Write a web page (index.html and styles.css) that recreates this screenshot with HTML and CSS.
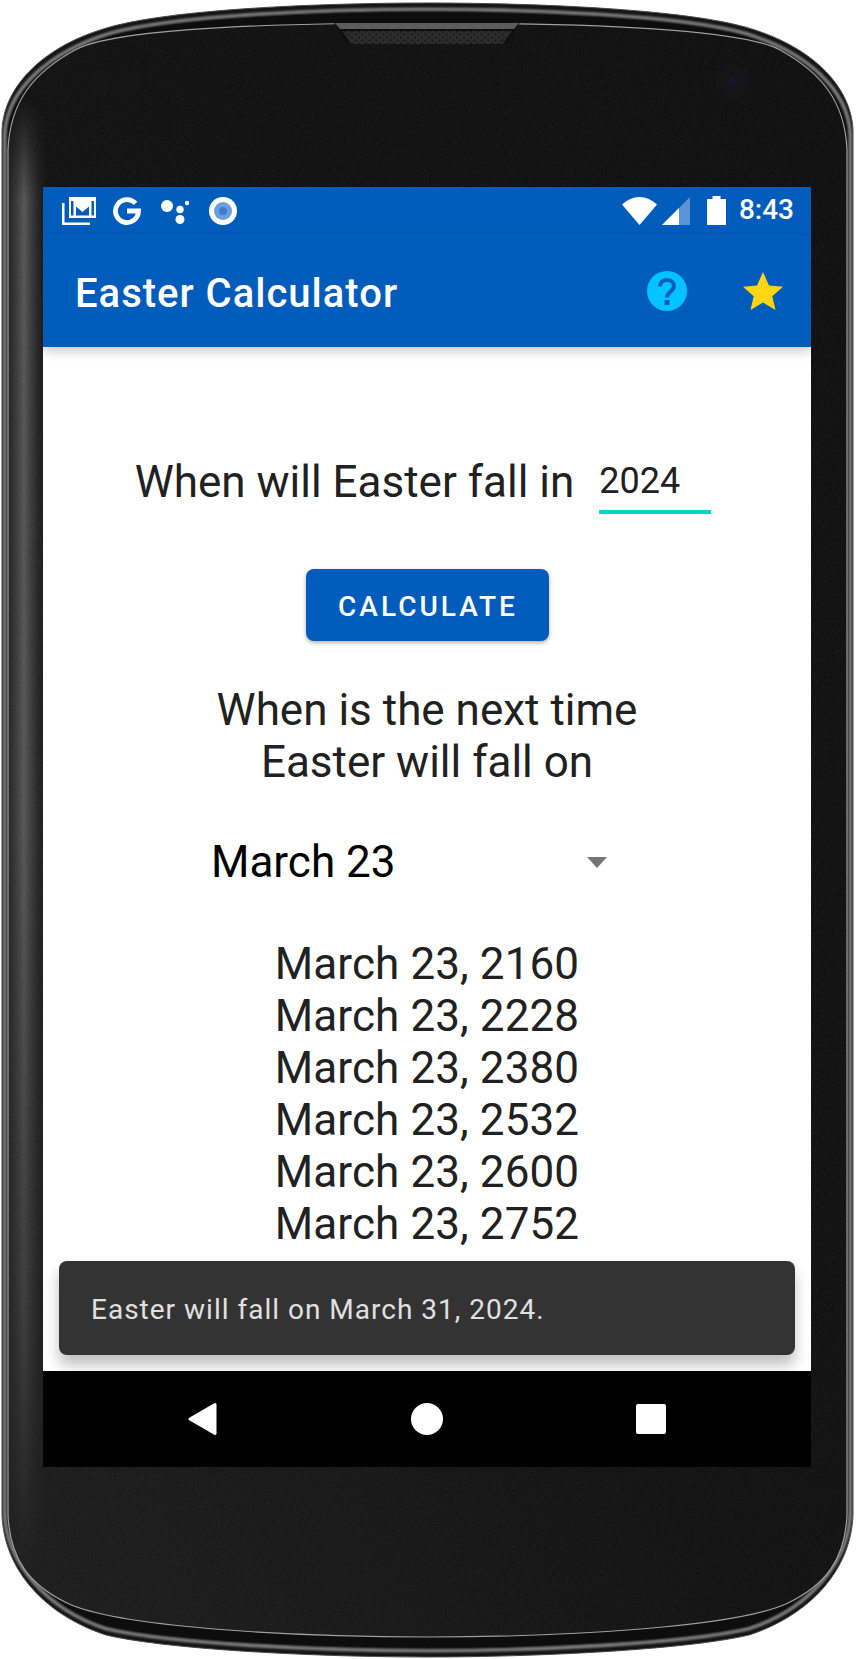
FILE: index.html
```html
<!DOCTYPE html>
<html lang="en">
<head>
<meta charset="utf-8">
<title>Easter Calculator</title>
<link rel="stylesheet" href="styles.css">
</head>
<body>
<div class="phone">
  <svg class="frame" width="856" height="1659" viewBox="0 0 856 1659" aria-hidden="true">
    <defs>
      <path id="outer" d="M2 130C4 85 45 45 110 27C175 9 320 3 428 3C535 3 680 9 745 27C810 45 851 85 853 130L853 1515C851 1570 810 1615 749 1635C685 1650 535 1657 428 1657C320 1657 170 1650 106 1635C45 1615 4 1570 2 1515Z"/>
      <path id="mid" d="M4.500 135C6 90 48 52 110 33C175 15 320 9 428 9C535 9 680 15 745 33C807 52 849 90 850.500 135L850.500 1515C848 1565 807 1610 749 1629C685 1644 535 1651 428 1651C320 1651 170 1644 106 1629C48 1610 7 1565 4.500 1515Z"/>
      <path id="inner" d="M8 150C10 100 35 72 75 50C115 28 280 23 428 23C575 23 740 28 780 50C820 72 845 100 847 150L847 1515C845 1560 825 1585 788 1603C738 1627 565 1637 428 1637C290 1637 117 1627 67 1603C30 1585 10 1560 8 1515Z"/>
      <clipPath id="clipInner"><use href="#inner"/></clipPath>
      <linearGradient id="bodyGrad" x1="1" y1="0" x2="0" y2="1">
        <stop offset="0" stop-color="#0b0b0b"/>
        <stop offset="0.55" stop-color="#0e0e0e"/>
        <stop offset="1" stop-color="#1a1a1a"/>
      </linearGradient>
      <linearGradient id="sideGrad" x1="0" y1="0" x2="1" y2="0">
        <stop offset="0" stop-color="#5a5a5a" stop-opacity="0"/>
        <stop offset="0.2" stop-color="#5a5a5a" stop-opacity="0.25"/>
        <stop offset="0.5" stop-color="#6a6a6a" stop-opacity="0.75"/>
        <stop offset="0.8" stop-color="#5a5a5a" stop-opacity="0.22"/>
        <stop offset="1" stop-color="#5a5a5a" stop-opacity="0"/>
      </linearGradient>
      <linearGradient id="fadeGrad" x1="0" y1="0" x2="0" y2="1">
        <stop offset="0" stop-color="#000"/>
        <stop offset="0.06" stop-color="#000"/>
        <stop offset="0.12" stop-color="#fff"/>
        <stop offset="0.5" stop-color="#fff"/>
        <stop offset="0.8" stop-color="#888"/>
        <stop offset="0.95" stop-color="#000"/>
      </linearGradient>
      <mask id="fadeMask"><rect x="0" y="0" width="856" height="1659" fill="url(#fadeGrad)"/></mask>
      <filter id="soft" x="-2%" y="-2%" width="104%" height="104%"><feGaussianBlur stdDeviation="0.8"/></filter>
      <filter id="grain" x="0" y="0" width="100%" height="100%">
        <feTurbulence type="fractalNoise" baseFrequency="0.9" numOctaves="2" seed="4"/>
        <feColorMatrix values="0 0 0 0 1  0 0 0 0 1  0 0 0 0 1  0.1 0 0 0 -0.02"/>
      </filter>
      <pattern id="dots" width="7" height="6" patternUnits="userSpaceOnUse">
        <circle cx="2" cy="1.500" r="1" fill="#141414"/>
        <circle cx="5.500" cy="4.500" r="1" fill="#141414"/>
      </pattern>
    </defs>
    <use href="#outer" fill="#151515" stroke="#4a4a4a" stroke-width="1"/>
    <use href="#mid" fill="#101010" stroke="#8c8c8c" stroke-width="2.600" filter="url(#soft)"/>
    <use href="#inner" fill="url(#bodyGrad)"/>
    <g clip-path="url(#clipInner)">
      <rect x="0" y="0" width="48" height="1659" fill="url(#sideGrad)" mask="url(#fadeMask)"/>
      <rect x="0" y="0" width="856" height="1659" filter="url(#grain)"/>
    </g>
    <use href="#inner" fill="none" stroke="#a0a0a0" stroke-width="1.200"/>
    <path d="M333 21L347 44H507L521 21Z" fill="#0e0e0e"/>
    <path d="M335 23H519L514 29H340Z" fill="#5c5c5c"/>
    <path d="M342 31H512L503 44H351Z" fill="#2c2c2c"/>
    <path d="M342 31H512L503 44H351Z" fill="url(#dots)"/>
    <circle cx="733" cy="81" r="18" fill="#151517"/>
    <circle cx="733" cy="81" r="4" fill="#17172c"/>
    <circle cx="100" cy="81" r="11" fill="#161616"/>
    <circle cx="130" cy="81" r="11" fill="#161616"/>
  </svg>

  <main class="screen">
    <header class="status">
      <div class="status-group">
        <svg class="ic-gmail" width="34" height="28" viewBox="0 0 34 28">
          <path fill="#fff" d="M0 6h2.500v19.500H28V28H0z"/>
          <rect x="7" y="0" width="27" height="21" fill="#fff"/>
          <rect x="9" y="4" width="2.500" height="14.500" fill="#025cbb"/>
          <rect x="29.500" y="4" width="2.500" height="14.500" fill="#025cbb"/>
          <path fill="#025cbb" d="M14 9.500l6.500 5.500 6.500-5.500v9H14z"/>
        </svg>
        <svg width="28" height="28" viewBox="0 0 28 28">
          <path fill="none" stroke="#fff" stroke-width="4.800" d="M22.600 6.400A11.500 11.500 0 1 0 25.500 14H14"/>
        </svg>
        <svg class="ic-dots" width="28" height="28" viewBox="0 0 28 28">
          <circle cx="6" cy="9" r="6" fill="#fff"/>
          <circle cx="19" cy="12.500" r="3.700" fill="#fff"/>
          <circle cx="19" cy="22.500" r="4.500" fill="#fff"/>
          <circle cx="26" cy="6" r="2.200" fill="#fff"/>
        </svg>
        <svg class="ic-ring" width="28" height="28" viewBox="0 0 28 28">
          <circle cx="14" cy="14" r="14" fill="#fff"/>
          <circle cx="14" cy="14" r="9" fill="#6a9fdc"/>
          <circle cx="14" cy="14" r="4" fill="#3f7dcb"/>
        </svg>
      </div>
      <div class="status-group status-right">
        <svg class="ic-wifi" width="35" height="28" viewBox="0 0 35 28">
          <path fill="#fff" d="M0 7.500C5 3 11 0 17.500 0S30 3 35 7.500L17.500 28z"/>
        </svg>
        <svg class="ic-signal" width="28" height="28" viewBox="0 0 28 28">
          <path fill="#5a93d8" d="M28 0v28H0z"/>
          <path fill="#fff" d="M17 11v17H0z"/>
        </svg>
        <svg class="ic-battery" width="19" height="29" viewBox="0 0 19 29">
          <path fill="#fff" d="M5.500 0h8v3H19v26H0V3h5.500z"/>
        </svg>
        <span class="clock">8:43</span>
      </div>
    </header>

    <div class="appbar">
      <h1 class="title">Easter Calculator</h1>
      <div class="actions">
        <svg width="40" height="40" viewBox="0 0 40 40">
          <circle cx="20" cy="20" r="20" fill="#00c3ff"/>
          <path fill="none" stroke="#0b5fbc" stroke-width="4" d="M13 15.500c0-4 3-6.500 7-6.500s7 2.500 7 6c0 5.500-7 5.500-7 11.500"/>
          <rect x="17.500" y="29" width="5" height="5" fill="#0b5fbc"/>
        </svg>
        <svg width="40" height="38" viewBox="0 0 40 38">
          <path fill="#ffd60f" d="M20 0l6 13.500 14 1.300-10.700 9.500 3.200 13.700L20 30.500 7.500 38l3.200-13.700L0 14.800l14-1.300z"/>
        </svg>
      </div>
    </div>

    <section class="content">
      <div class="year-row">
        <span class="year-label">When will Easter fall in</span>
        <span class="year-input">2024</span>
      </div>
      <button class="calc" type="button">CALCULATE</button>
      <p class="question">When is the next time<br>Easter will fall on</p>
      <div class="select">
        <span class="select-value">March 23</span>
        <span class="select-arrow"></span>
      </div>
      <ul class="dates">
        <li>March 23, 2160</li>
        <li>March 23, 2228</li>
        <li>March 23, 2380</li>
        <li>March 23, 2532</li>
        <li>March 23, 2600</li>
        <li>March 23, 2752</li>
      </ul>
      <div class="toast">Easter will fall on March 31, 2024.</div>
    </section>

    <nav class="navbar">
      <svg width="30" height="34" viewBox="0 0 30 34">
        <path fill="#fff" stroke="#fff" stroke-width="3" stroke-linejoin="round" d="M27 2.500V31.500L2 17z"/>
      </svg>
      <span class="nav-home"></span>
      <span class="nav-recent"></span>
    </nav>
  </main>
</div>
</body>
</html>
```

FILE: styles.css
```css
* { box-sizing: border-box; }

html, body {
  margin: 0;
  padding: 0;
  background: #fff;
}

body {
  width: 856px;
  height: 1659px;
  overflow: hidden;
  font-family: "Roboto", "Liberation Sans", sans-serif;
}

.phone {
  position: relative;
  width: 856px;
  height: 1659px;
  padding: 187px 45px 192px 43px;
}

.frame {
  position: absolute;
  left: 0;
  top: 0;
}

.screen {
  position: relative;
  width: 768px;
  height: 1280px;
  display: flex;
  flex-direction: column;
  background: #fff;
  overflow: hidden;
}

.status {
  height: 48px;
  flex: none;
  background: #025cbb;
  display: flex;
  justify-content: space-between;
  padding: 10px 17px 0 19px;
  color: #fff;
}

.status-group {
  display: flex;
  gap: 17px;
  height: 28px;
  align-items: flex-start;
}

.status-right {
  gap: 0;
}

.ic-dots { margin-left: 3px; }
.ic-ring { margin-left: 3px; }
.ic-signal { margin-left: 5px; }
.ic-battery { margin-left: 17px; margin-top: -1px; }

.clock {
  margin-left: 13px;
  font-size: 28px;
  font-weight: 500;
  line-height: 33px;
  margin-top: -4px;
}

.appbar {
  position: relative;
  z-index: 2;
  height: 112px;
  flex: none;
  background: #025cbb;
  box-shadow: 0 4px 10px rgba(0, 0, 0, 0.22);
  display: flex;
  align-items: center;
  justify-content: space-between;
  padding: 0 28px 0 32px;
  color: #fff;
}

.title {
  margin: 6px 0 0;
  font-size: 40px;
  font-weight: 500;
  line-height: 48px;
  letter-spacing: 1px;
}

.actions {
  display: flex;
  gap: 56px;
  align-items: center;
}

.content {
  position: relative;
  flex: 1;
  display: flex;
  flex-direction: column;
  align-items: center;
  color: #212121;
  overflow: hidden;
}

.year-row {
  display: flex;
  align-items: flex-start;
  margin-top: 100px;
  gap: 25px;
  padding-right: 8px;
}

.year-label {
  padding-top: 9px;
  font-size: 44px;
  line-height: 52px;
}

.year-input {
  width: 112px;
  height: 67px;
  padding-top: 9px;
  font-size: 36px;
  line-height: 50px;
  border-bottom: 4px solid #00d8c8;
}

.calc {
  margin-top: 55px;
  width: 243px;
  height: 72px;
  border: 0;
  border-radius: 8px;
  background: #025cbb;
  color: #fff;
  font-family: inherit;
  font-size: 28px;
  font-weight: 500;
  letter-spacing: 3px;
  padding: 2px 0 0 2px;
  box-shadow: 0 2px 4px rgba(0, 0, 0, 0.3);
}

.question {
  margin: 43px 0 0;
  font-size: 44px;
  line-height: 52px;
  text-align: center;
}

.select {
  margin-top: 48px;
  width: 432px;
  padding: 0;
  display: flex;
  align-items: center;
  justify-content: space-between;
  color: #000;
}

.select-value {
  font-size: 44px;
  line-height: 52px;
}

.select-arrow {
  width: 0;
  height: 0;
  margin-right: 36px;
  border-left: 10px solid transparent;
  border-right: 10px solid transparent;
  border-top: 11px solid #757575;
}

.dates {
  list-style: none;
  margin: 50px 0 0;
  padding: 0;
  font-size: 44px;
  line-height: 52px;
  letter-spacing: 0.1px;
  text-align: center;
}

.toast {
  position: absolute;
  left: 16px;
  right: 16px;
  bottom: 16px;
  height: 94px;
  padding: 2px 32px 0;
  display: flex;
  align-items: center;
  background: #333;
  border-radius: 8px;
  color: #e0e0e0;
  font-size: 28px;
  letter-spacing: 1px;
  box-shadow: 0 10px 14px rgba(0, 0, 0, 0.25);
}

.navbar {
  height: 96px;
  flex: none;
  background: #000;
  display: flex;
  align-items: center;
  justify-content: space-between;
  padding: 0 145px;
}

.nav-home {
  width: 32px;
  height: 32px;
  border-radius: 50%;
  background: #fff;
}

.nav-recent {
  width: 30px;
  height: 30px;
  border-radius: 2px;
  background: #fff;
}
```
